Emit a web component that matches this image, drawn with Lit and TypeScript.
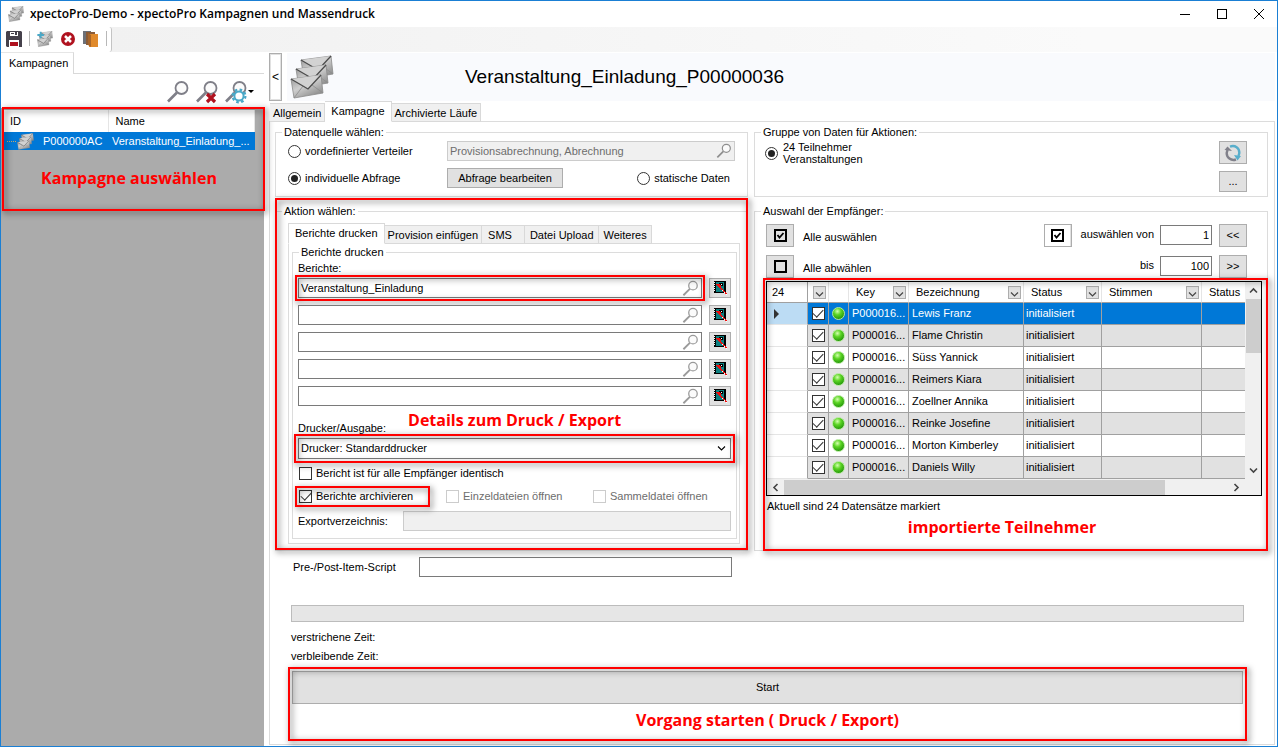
import { LitElement, html, css, svg, nothing } from "lit";
import { customElement, state } from "lit/decorators.js";
import { classMap } from "lit/directives/class-map.js";

const envelope = (x: number, y: number) => svg`
  <g transform="translate(${x} ${y})">
    <path d="M0 4 L30 0 L32 18 L3 23 Z" fill="url(#env)" stroke="#8a8a8a" stroke-width="0.8" />
    <path d="M3 23 L12 11 M32 18 L21 10" stroke="#8c8c8c" stroke-width="0.8" fill="none" />
    <path d="M0 4 L17 14 L30 0 Z" fill="#d2d2d2" />
    <path d="M0 4 L17 14 L30 0" fill="none" stroke="#4c4c4c" stroke-width="1.3" />
  </g>`;

const mails = (size: number) => html`
  <svg class="icon" width=${size} height=${size} viewBox="0 0 44 44" aria-hidden="true">
    <defs>
      <linearGradient id="env" x1="0" y1="0" x2="0.7" y2="1">
        <stop offset="0" stop-color="#8e8e8e" />
        <stop offset="0.5" stop-color="#cfcfcf" />
        <stop offset="1" stop-color="#8a8a8a" />
      </linearGradient>
    </defs>
    ${envelope(11, 1)}${envelope(6, 10)}${envelope(1, 20)}
  </svg>`;

const lens = (size: number, tone = "#7f7f88", extra: unknown = nothing) => html`
  <svg class="icon" width=${size} height=${size} viewBox="0 0 24 24" fill="none" aria-hidden="true">
    <circle cx="15.5" cy="8" r="6" stroke=${tone} stroke-width="1.8" fill="#fbfbfb" />
    <path d="M11 12.5 L2 21.5" stroke=${tone} stroke-width="2.6" />
    ${extra}
  </svg>`;

const cross = svg`<path d="M12 14 L20 22 M20 14 L12 22" stroke="#b0121f" stroke-width="3.2" />`;
const gear = svg`
  <circle cx="15" cy="16" r="6.4" stroke="#4aa9c8" stroke-width="2.2" stroke-dasharray="2.6 2.4" />
  <circle cx="15" cy="16" r="4.6" fill="#fff" stroke="#4aa9c8" stroke-width="2" />`;

const chevron = (path: string, weight = 1.6) => html`
  <svg class="icon" width="9" height="9" viewBox="0 0 9 9" fill="none" aria-hidden="true">
    <path d=${path} stroke="currentColor" stroke-width=${weight} />
  </svg>`;
const UP = "M1 6.5 L4.5 3 L8 6.5";
const DOWN = "M1 2.5 L4.5 6 L8 2.5";
const LEFT = "M6.5 1 L3 4.5 L6.5 8";
const RIGHT = "M2.5 1 L6 4.5 L2.5 8";

const editor = html`
  <svg class="icon" width="16" height="16" viewBox="0 0 16 16" shape-rendering="crispEdges" aria-hidden="true">
    <path d="M2 1h12v12H2z" fill="#000" />
    <path d="M4 2h8v10H4z" fill="#0d8080" />
    <path d="M2 2h1v1H2z M2 4h1v1H2z M2 6h1v1H2z M2 8h1v1H2z M2 10h1v1H2z" fill="#fff" />
    <path d="M7 3h4v3H7z" fill="#000" />
    <path d="M9 4h1v1H9z" fill="#fff" />
    <path d="M4 4h4v1h1v2H8v1H7V7H6V6H5V5H4z" fill="#f00d0d" />
    <path d="M8 7h1v1h1v1h1v1h1v1h1v1h1v1h1v2h-1v-1h-1v-1h-1v-1h-1v-1h-1v-1H9V9H8z" fill="#f00d0d" />
    <path d="M10 10h1v1h-1z M12 12h1v1h-1z M14 14h1v1h-1z" fill="#fff" />
  </svg>`;

const tick = (checked: boolean, plain = false) => html`
  <svg class="icon ${plain ? "plain" : ""}" width="19" height="19" viewBox="0 0 19 19" fill="none" aria-hidden="true">
    <rect x="4" y="4" width="11" height="11" stroke="#000" stroke-width="2" />
    ${checked ? svg`<path d="M6.5 9 L8.5 11.5 L12.5 7" stroke="#000" stroke-width="1.8" />` : nothing}
  </svg>`;

const PEOPLE = [
  "Lewis Franz",
  "Flame Christin",
  "Süss Yannick",
  "Reimers Kiara",
  "Zoellner Annika",
  "Reinke Josefine",
  "Morton Kimberley",
  "Daniels Willy",
];

const REPORTS = ["Veranstaltung_Einladung", "", "", "", ""];

@customElement("app-root")
export class AppRoot extends LitElement {
  @state() private selected = 0;

  static styles = css`
    :host {
      display: block;
      font: 11px/13px "Liberation Sans", Arial, sans-serif;
      color: #000;
    }
    * {
      box-sizing: border-box;
    }
    button,
    input,
    select {
      font: inherit;
      color: inherit;
      margin: 0;
      border-radius: 0;
      outline: none;
    }
    .icon {
      display: block;
      flex: none;
    }
    .window {
      min-height: 100vh;
      display: flex;
      flex-direction: column;
      border: 1px solid #1a7fd4;
      background: #fff;
    }

    /* title bar and tool strip */
    .titlebar {
      display: flex;
      align-items: center;
      height: 26px;
      padding: 0 11px 0 7px;
      gap: 6px;
      font: 600 12px/16px "Open Sans", "Noto Sans", sans-serif;
    }
    .titlebar h1 {
      flex: 1;
      margin: 0;
      font: inherit;
    }
    .winbuttons {
      display: flex;
      gap: 23px;
    }
    .winbuttons button,
    .strip button,
    .search button {
      border: 0;
      padding: 0;
      background: none;
      display: flex;
      align-items: center;
    }
    .strip {
      display: flex;
      height: 25px;
      background: linear-gradient(90deg, #f0f0f0, #fafafa 85%);
    }
    .tools {
      display: flex;
      align-items: center;
      gap: 7px;
      padding: 0 4px 2px 5px;
      background: #fff;
      border-right: 1px solid #c4c4c4;
      border-radius: 0 3px 3px 0;
    }
    .tools .sep {
      width: 1px;
      height: 15px;
      background: #b8b8b8;
    }

    .body {
      flex: 1;
      display: flex;
      gap: 5px;
    }

    /* campaign list */
    .side {
      flex: none;
      width: 263px;
      display: flex;
      flex-direction: column;
    }
    .sidetabs {
      display: flex;
    }
    .sidetabs a {
      padding: 4px 5px 4px 8px;
      border-right: 1px solid #d9d9d9;
      border-top: 1px solid #e6e6e6;
      color: #000;
      text-decoration: none;
    }
    .sidetabs span {
      flex: 1;
      border-bottom: 1px solid #d9d9d9;
    }
    .search {
      display: flex;
      justify-content: flex-end;
      align-items: center;
      gap: 5px;
      height: 34px;
      padding: 2px 10px 0 0;
    }
    .listarea {
      flex: 1;
      padding-left: 1px;
      background: #ababab;
    }
    .listbox {
      position: relative;
      height: 103px;
      padding: 2px 9px 0 1px;
    }
    .tree {
      width: 100%;
      border-collapse: collapse;
      table-layout: fixed;
    }
    .tree th {
      height: 22px;
      padding: 0 7px;
      background: #fff;
      text-align: left;
      font-weight: normal;
      border-right: 1px solid #e5e5e5;
    }
    .tree td {
      height: 18px;
      padding: 0 4px;
      background: #0078d7;
      color: #fff;
      white-space: nowrap;
    }
    .node {
      display: flex;
      align-items: center;
      gap: 9px;
    }
    .node::before {
      content: "";
      width: 9px;
      margin-right: -8px;
      border-top: 1px dotted #c9a66b;
    }

    /* red frames over the explained regions */
    .marked {
      position: relative;
    }
    .frame {
      position: absolute;
      inset: 0;
      border: 2px solid #f00;
      filter: drop-shadow(2px 2px 3px rgba(0, 0, 0, 0.65));
      pointer-events: none;
    }
    .frame.list {
      inset: -1px -1px 0 0;
    }
    .frame.wide {
      inset: -4px;
    }
    .frame.action-frame {
      inset: -20px -1px 0 -1px;
    }
    .note {
      color: #f00;
      font: 700 16px/20px "Open Sans", "Noto Sans", sans-serif;
      text-align: center;
      white-space: nowrap;
      margin: 0;
    }
    .listbox .note {
      margin-top: 18px;
    }

    /* right hand side */
    .main {
      flex: 1;
      min-width: 0;
      display: flex;
      flex-direction: column;
      padding: 1px 2px 1px 0;
    }
    .head {
      display: flex;
      height: 48px;
      gap: 5px;
    }
    .collapse {
      width: 13px;
      padding: 0;
      border: 1px solid #adadad;
      box-shadow: inset 0 0 0 1px #e1e1e1;
      background: #fff;
      font-size: 12px;
    }
    .banner {
      flex: 1;
      display: flex;
      align-items: center;
      padding-left: 3px;
      gap: 131px;
      background: #f9fafd;
    }
    .banner h2 {
      margin: 0;
      font-size: 19px;
      line-height: 22px;
      font-weight: normal;
    }
    .tabs {
      display: flex;
      align-items: flex-end;
      height: 21px;
      position: relative;
      z-index: 1;
      margin-bottom: -1px;
      padding-left: 1px;
    }
    .tabs a {
      height: 19px;
      padding: 3px 3px 0;
      border: 1px solid #d9d9d9;
      border-left-width: 0;
      background: #f0f0f0;
      color: #000;
      text-decoration: none;
      white-space: nowrap;
    }
    .tabs a.on {
      height: 21px;
      padding: 3px 6px 0;
      background: #fff;
      border-bottom-color: #fff;
    }
    .tabs.inner {
      padding-left: 0;
    }
    .tabs.inner a.on {
      border-left-width: 1px;
    }
    .tabs.inner .roomy {
      padding-right: 12px;
      padding-left: 6px;
    }
    .tabs.inner .mid {
      padding-right: 4px;
      padding-left: 5px;
    }
    .page {
      flex: 1;
      border: 1px solid #dcdcdc;
      padding: 3px 6px 2px 5px;
    }
    .columns {
      display: grid;
      grid-template-columns: 473px minmax(480px, 1fr);
      column-gap: 6px;
      row-gap: 7px;
    }
    fieldset {
      margin: 0;
      min-width: 0;
      border: 1px solid #dcdcdc;
      padding: 0;
    }
    legend {
      margin-left: 6px;
      padding: 0 2px;
      line-height: 14px;
    }
    .source {
      padding: 2px 12px 8px;
    }
    .grid2 {
      display: grid;
      grid-template-columns: 159px 1fr;
      row-gap: 7px;
      align-items: center;
    }
    .split {
      display: flex;
      justify-content: space-between;
      align-items: center;
      padding-right: 5px;
    }
    label.opt {
      display: flex;
      align-items: center;
      gap: 4px;
      white-space: nowrap;
    }
    input[type="radio"],
    input[type="checkbox"] {
      appearance: none;
      flex: none;
      width: 13px;
      height: 13px;
      border: 1px solid #333;
      background: #fff;
      display: grid;
      place-items: center;
    }
    input[type="radio"] {
      border-radius: 50%;
    }
    input[type="radio"]:checked::before {
      content: "";
      width: 7px;
      height: 7px;
      border-radius: 50%;
      background: #222;
    }
    input[type="checkbox"]:checked::before {
      content: "";
      width: 9px;
      height: 5px;
      margin-top: -3px;
      border: solid #333;
      border-width: 0 0 1px 1px;
      transform: rotate(-47deg);
    }
    input:disabled[type="checkbox"] {
      border-color: #ccc;
    }
    .opt.off {
      color: #6d6d6d;
    }
    .btn {
      display: flex;
      align-items: center;
      justify-content: center;
      padding: 0;
      border: 1px solid #adadad;
      background: #e1e1e1;
    }
    .btn.query {
      width: 116px;
      height: 20px;
    }
    .btn.square {
      width: 28px;
      height: 23px;
    }
    .btn.low {
      height: 21px;
    }
    .plain {
      box-sizing: content-box;
      padding: 1px 3px;
      background: #fff;
    }
    .field {
      display: flex;
      align-items: center;
      height: 20px;
      padding-right: 2px;
      border: 1px solid #7a7a7a;
      background: #fff;
    }
    .field input {
      flex: 1;
      min-width: 0;
      padding: 0 2px;
      border: 0;
      background: none;
    }
    .field.off {
      border-color: #ccc;
      background: #f0f0f0;
      color: #6d6d6d;
    }

    .action {
      padding: 5px 7px 4px 12px;
    }
    .tabpage {
      border: 1px solid #dcdcdc;
      padding: 1px 2px 4px 3px;
    }
    .print {
      padding: 3px 5px 7px 5px;
      display: flex;
      flex-direction: column;
    }
    .reports {
      display: grid;
      gap: 7px;
      margin-top: 3px;
    }
    .report {
      display: grid;
      grid-template-columns: 1fr 22px;
      gap: 7px;
    }
    .report .btn {
      height: 20px;
    }
    .output {
      display: flex;
      align-items: flex-end;
      gap: 22px;
      height: 29px;
    }
    .output .note {
      padding-bottom: 5px;
    }
    .combo {
      margin-top: 3px;
      display: grid;
      align-items: center;
    }
    .combo select {
      grid-area: 1 / 1;
      appearance: none;
      width: 100%;
      height: 21px;
      padding: 0 2px;
      border: 1px solid #7a7a7a;
      background: #fff;
    }
    .combo .icon {
      grid-area: 1 / 1;
      justify-self: end;
      margin-right: 5px;
      pointer-events: none;
    }
    .checks {
      display: grid;
      grid-template-columns: 147px 147px 1fr;
      row-gap: 10px;
      padding: 8px 0 0 1px;
    }
    .checks .all {
      grid-column: 1 / 4;
    }
    .checks .marked {
      justify-self: start;
    }
    .frame.check {
      inset: -4px -17px -4px -4px;
    }
    .export {
      display: grid;
      grid-template-columns: 105px 1fr;
      align-items: center;
      margin-top: 8px;
    }

    .group {
      padding: 2px 20px 4px 10px;
      display: flex;
      justify-content: space-between;
      align-items: flex-start;
    }
    .group label {
      line-height: 12px;
      gap: 5px;
    }
    .stack {
      display: grid;
      gap: 7px;
    }
    .recipients {
      display: flex;
      flex-direction: column;
      padding: 6px 5px 0 11px;
    }
    .picks {
      display: grid;
      grid-template-columns: auto 1fr auto auto auto auto;
      align-items: center;
      row-gap: 8px;
      padding-right: 15px;
    }
    .picks .name {
      padding: 4px 0 0 9px;
    }
    .picks .range {
      padding: 0 6px 2px 9px;
      text-align: right;
    }
    .picks .num {
      width: 52px;
      height: 20px;
      margin: 0 7px 2px 0;
      padding: 0 2px;
      text-align: right;
      border: 1px solid #7a7a7a;
    }
    .gap {
      grid-column: 3;
    }

    .result {
      margin-top: 3px;
      padding-bottom: 13px;
    }
    .result .note {
      padding-right: 24px;
    }
    .frame.result-frame {
      inset: -3px -6px -1px -3px;
    }
    .scroller {
      display: grid;
      grid-template-columns: 1fr 16px;
      border: 1px solid #000;
      background: #f0f0f0;
    }
    .people {
      width: 100%;
      border-spacing: 0;
      table-layout: fixed;
      background: #fff;
    }
    .people th {
      height: 21px;
      padding: 0 0 0 7px;
      font-weight: normal;
      text-align: left;
      border-right: 1px solid #e5e5e5;
      border-bottom: 1px solid #a0a0a0;
    }
    .people th:first-child {
      padding-left: 5px;
      border-right-color: #a0a0a0;
    }
    .people th:nth-child(2) {
      padding-left: 0;
    }
    .th {
      display: flex;
      justify-content: space-between;
      align-items: center;
      padding-right: 2px;
    }
    .filter {
      width: 13px;
      height: 13px;
      padding: 3px 1px 0;
      border: 1px solid #adadad;
      background: #e1e1e1;
      color: #444;
    }
    .people td {
      height: 22px;
      padding: 0 0 0 3px;
      border-right: 1px solid #a0a0a0;
      border-bottom: 1px solid #a0a0a0;
      white-space: nowrap;
    }
    .people td.tight {
      padding: 0 2px;
    }
    .people tbody tr:nth-child(even) td {
      background: #e1e1e1;
    }
    .people tbody tr.sel td {
      background: #0078d7;
      color: #fff;
    }
    .people tbody tr td:first-child {
      background: #fff;
      border-bottom-color: #e5e5e5;
      padding-left: 7px;
    }
    .people tbody tr.sel td:first-child {
      background: #bcdcf4;
    }
    .people tr > :last-child {
      border-right: 0;
    }
    .c1 { width: 41px; }
    .c2 { width: 21px; }
    .c3 { width: 20px; }
    .c4 { width: 60px; }
    .c5 { width: 115px; }
    .c6 { width: 78px; }
    .c7 { width: 100px; }
    .arrow {
      display: block;
      border: solid transparent;
      border-width: 5px 0 5px 5px;
      border-left-color: #333;
      width: 0;
    }
    .led {
      display: block;
      width: 13px;
      height: 13px;
      margin: 0 auto;
      border-radius: 50%;
      background: radial-gradient(circle at 40% 30%, #d4ffb0 0, #5cd524 35%, #23960a 80%);
      border: 1px solid #b4e89c;
    }
    .people input {
      margin: 0 auto;
    }
    .vbar,
    .hbar {
      display: flex;
      align-items: center;
      color: #444;
    }
    .vbar {
      flex-direction: column;
      padding: 4px 0;
    }
    .vbar i {
      width: 15px;
      height: 54px;
      margin: 4px 0 auto;
      background: #cdcdcd;
    }
    .hbar {
      height: 16px;
      padding: 0 4px;
    }
    .hbar i {
      width: 81%;
      height: 15px;
      margin: 0 auto 0 4px;
      background: #cdcdcd;
    }
    .status {
      margin: 0;
      padding: 4px 0 4px 1px;
    }

    .bottom {
      padding: 6px 24px 0 16px;
    }
    .script {
      display: grid;
      grid-template-columns: 126px 313px;
      align-items: center;
      padding-left: 2px;
    }
    .bar {
      height: 17px;
      margin-top: 28px;
      border: 1px solid #bcbcbc;
      background: #e6e6e6;
    }
    .times {
      margin-top: 6px;
      line-height: 19px;
    }
    .run {
      margin: 5px 1px 0;
      height: 66px;
    }
    .run .btn {
      width: 100%;
      height: 33px;
    }
    .run .note {
      padding-top: 6px;
    }
  `;

  private renderSide() {
    return html`
      <nav class="side">
        <div class="sidetabs"><a href="#kampagnen">Kampagnen</a><span></span></div>
        <div class="search">
          <button aria-label="Suchen">${lens(24)}</button>
          <button aria-label="Suche löschen">${lens(24, "#7f7f88", cross)}</button>
          <button aria-label="Suche einstellen">
            ${lens(24, "#7f7f88", gear)}
            <svg class="icon" width="6" height="4" aria-hidden="true"><path d="M0 0h6L3 3z" /></svg>
          </button>
        </div>
        <div class="listarea">
          <div class="listbox">
            <table class="tree">
              <colgroup><col style="width:105px" /><col /></colgroup>
              <thead><tr><th>ID</th><th>Name</th></tr></thead>
              <tbody>
                <tr>
                  <td><div class="node">${mails(17)}<span>P000000AC</span></div></td>
                  <td>Veranstaltung_Einladung_...</td>
                </tr>
              </tbody>
            </table>
            <p class="note">Kampagne auswählen</p>
            <div class="frame list"></div>
          </div>
        </div>
      </nav>`;
  }

  private renderSource() {
    return html`
      <fieldset>
        <legend>Datenquelle wählen:</legend>
        <div class="source grid2">
          <label class="opt"><input type="radio" name="source" />vordefinierter Verteiler</label>
          <div class="field off">
            <input aria-label="Verteiler" value="Provisionsabrechnung, Abrechnung" disabled />${lens(16, "#8e8e8e")}
          </div>
          <label class="opt"><input type="radio" name="source" checked />individuelle Abfrage</label>
          <div class="split">
            <button class="btn query">Abfrage bearbeiten</button>
            <label class="opt"><input type="radio" name="source" />statische Daten</label>
          </div>
        </div>
      </fieldset>`;
  }

  private renderGroup() {
    return html`
      <fieldset>
        <legend>Gruppe von Daten für Aktionen:</legend>
        <div class="group">
          <label class="opt">
            <input type="radio" name="group" checked /><span>24 Teilnehmer<br />Veranstaltungen</span>
          </label>
          <div class="stack">
            <button class="btn square" aria-label="Aktualisieren">
              <svg class="icon" width="18" height="18" viewBox="0 0 18 18" fill="none" aria-hidden="true">
                <path d="M6 2.600 C11 .800 15.500 4 15.300 9 L14.500 12" stroke="#58aecb" stroke-width="2.400" />
                <path d="M10 11 L17 12 L13.500 16.500 Z" fill="#58aecb" />
                <path d="M12 15.500 C7 17.200 2.500 13.500 2.700 9 L3.500 6" stroke="#80808a" stroke-width="2.400" />
                <path d="M0.500 6 L3.500 2.500 L8 7 Z" fill="#80808a" />
              </svg>
            </button>
            <button class="btn square low">...</button>
          </div>
        </div>
      </fieldset>`;
  }

  private renderAction() {
    return html`
      <fieldset class="marked">
        <legend>Aktion wählen:</legend>
        <div class="action">
          <nav class="tabs inner">
            <a class="on" href="#drucken">Berichte drucken</a><a href="#provision">Provision einfügen</a
            ><a class="roomy" href="#sms">SMS</a><a class="mid" href="#upload">Datei Upload</a
            ><a class="mid" href="#weiteres">Weiteres</a>
          </nav>
          <div class="tabpage">
            <fieldset>
              <legend>Berichte drucken</legend>
              <div class="print">
                <label for="report0">Berichte:</label>
                <div class="reports">
                  ${REPORTS.map(
                    (name, i) => html`
                      <div class="report">
                        <div class="field marked">
                          <input id="report${i}" aria-label="Bericht ${i + 1}" .value=${name} />${lens(17, "#9a9a9a")}
                          ${i === 0 ? html`<div class="frame wide"></div>` : nothing}
                        </div>
                        <button class="btn" aria-label="Bericht ${i + 1} bearbeiten">${editor}</button>
                      </div>`
                  )}
                </div>
                <div class="output">
                  <label for="printer">Drucker/Ausgabe:</label>
                  <p class="note">Details zum Druck / Export</p>
                </div>
                <div class="combo marked">
                  <select id="printer"><option>Drucker: Standarddrucker</option></select>
                  ${chevron(DOWN, 1.1)}
                  <div class="frame wide"></div>
                </div>
                <div class="checks">
                  <label class="opt all"><input type="checkbox" />Bericht ist für alle Empfänger identisch</label>
                  <label class="opt marked">
                    <input type="checkbox" checked />Berichte archivieren
                    <span class="frame check"></span>
                  </label>
                  <label class="opt off"><input type="checkbox" disabled />Einzeldateien öffnen</label>
                  <label class="opt off"><input type="checkbox" disabled />Sammeldatei öffnen</label>
                </div>
                <div class="export">
                  <label for="dir">Exportverzeichnis:</label>
                  <div class="field off"><input id="dir" disabled /></div>
                </div>
              </div>
            </fieldset>
          </div>
        </div>
        <div class="frame action-frame"></div>
      </fieldset>`;
  }

  private renderTable() {
    const filter = (name: string) =>
      html`<button class="filter" aria-label="Filter ${name}">${chevron(DOWN, 1.2)}</button>`;
    return html`
      <div class="scroller">
        <table class="people">
          <colgroup>
            <col class="c1" /><col class="c2" /><col class="c3" /><col class="c4" /><col class="c5" /><col
              class="c6" /><col class="c7" /><col />
          </colgroup>
          <thead>
            <tr>
              <th>24</th>
              <th><div class="th"><span></span>${filter("Auswahl")}</div></th>
              <th></th>
              <th><div class="th">Key${filter("Key")}</div></th>
              <th><div class="th">Bezeichnung${filter("Bezeichnung")}</div></th>
              <th><div class="th">Status${filter("Status")}</div></th>
              <th><div class="th">Stimmen${filter("Stimmen")}</div></th>
              <th>Status</th>
            </tr>
          </thead>
          <tbody>
            ${PEOPLE.map(
              (name, i) => html`
                <tr class=${classMap({ sel: i === this.selected })} @click=${() => (this.selected = i)}>
                  <td>${i === this.selected ? html`<span class="arrow"></span>` : nothing}</td>
                  <td class="tight"><input type="checkbox" checked aria-label=${name} /></td>
                  <td class="tight"><span class="led"></span></td>
                  <td>P000016...</td>
                  <td>${name}</td>
                  <td class="tight">initialisiert</td>
                  <td></td>
                  <td></td>
                </tr>`
            )}
          </tbody>
        </table>
        <div class="vbar">${chevron(UP)}<i></i>${chevron(DOWN)}</div>
        <div class="hbar">${chevron(LEFT)}<i></i>${chevron(RIGHT)}</div>
      </div>`;
  }

  private renderRecipients() {
    return html`
      <fieldset>
        <legend>Auswahl der Empfänger:</legend>
        <div class="recipients">
          <div class="picks">
            <button class="btn square" aria-label="Alle auswählen">${tick(true)}</button>
            <span class="name">Alle auswählen</span>
            <button class="btn square" aria-label="Bereich auswählen">${tick(true, true)}</button>
            <label class="range" for="from">auswählen von</label>
            <input class="num" id="from" value="1" />
            <button class="btn square">&lt;&lt;</button>

            <button class="btn square" aria-label="Alle abwählen">${tick(false)}</button>
            <span class="name">Alle abwählen</span>
            <span class="gap"></span>
            <label class="range" for="to">bis</label>
            <input class="num" id="to" value="100" />
            <button class="btn square">&gt;&gt;</button>
          </div>
          <div class="result marked">
            ${this.renderTable()}
            <p class="status">Aktuell sind 24 Datensätze markiert</p>
            <p class="note">importierte Teilnehmer</p>
            <div class="frame result-frame"></div>
          </div>
        </div>
      </fieldset>`;
  }

  render() {
    return html`
      <div class="window">
        <header class="titlebar">
          ${mails(16)}
          <h1>xpectoPro-Demo - xpectoPro Kampagnen und Massendruck</h1>
          <div class="winbuttons">
            <button aria-label="Minimieren">
              <svg class="icon" width="14" height="14"><path d="M2 7.500h10" stroke="#000" /></svg>
            </button>
            <button aria-label="Maximieren">
              <svg class="icon" width="14" height="14"><rect x="2.500" y="2.500" width="9" height="9" fill="none" stroke="#000" /></svg>
            </button>
            <button aria-label="Schließen">
              <svg class="icon" width="14" height="14"><path d="M2 2l10 10M12 2L2 12" stroke="#000" /></svg>
            </button>
          </div>
        </header>
        <div class="strip">
          <div class="tools">
            <button aria-label="Speichern">
              <svg class="icon" width="16" height="16" viewBox="0 0 16 16">
                <path d="M1 0h14l1 1v15H1l-1-1V1z" fill="#45414b" />
                <path d="M4 1h8v4H4z" fill="#fff" /><path d="M9 1h2v3H9z M5 2h3v1H5z" fill="#45414b" />
                <path d="M3 9h10v7H3z" fill="#fff" /><path d="M4 11h8v4H4z" fill="#b0121f" />
              </svg>
            </button>
            <span class="sep"></span>
            <button aria-label="Kampagne hinzufügen">
              <svg class="icon" width="16" height="16" viewBox="0 0 44 44">
                ${envelope(11, 1)}${envelope(6, 10)}${envelope(1, 20)}
                <path d="M10 2v18M1 11h18" stroke="#4aa9c8" stroke-width="5" />
              </svg>
            </button>
            <button aria-label="Löschen">
              <svg class="icon" width="16" height="16" viewBox="0 0 16 16">
                <circle cx="8" cy="8" r="7" fill="#b0121f" />
                <path d="M5 5l6 6M11 5l-6 6" stroke="#fff" stroke-width="2.500" />
              </svg>
            </button>
            <button aria-label="Kopieren">
              <svg class="icon" width="16" height="16" viewBox="0 0 16 16">
                <path d="M0 0h8v13H0z" fill="#6d7178" /><path d="M3 1h9v13H3z" fill="#8a5c38" />
                <path d="M6 3h9v13H6z" fill="#e08a2c" /><path d="M5 2l3 2v12l-3-2z" fill="#a8662a" />
              </svg>
            </button>
            <span class="sep"></span>
          </div>
        </div>
        <div class="body">
          ${this.renderSide()}
          <main class="main">
            <div class="head">
              <button class="collapse" aria-label="Liste einklappen">&lt;</button>
              <div class="banner">
                ${mails(44)}
                <h2>Veranstaltung_Einladung_P00000036</h2>
              </div>
            </div>
            <nav class="tabs">
              <a href="#allgemein">Allgemein</a><a class="on" href="#kampagne">Kampagne</a
              ><a href="#archiv">Archivierte Läufe</a>
            </nav>
            <div class="page">
              <div class="columns">
                ${this.renderSource()} ${this.renderGroup()} ${this.renderAction()} ${this.renderRecipients()}
              </div>
              <div class="bottom">
                <div class="script">
                  <label for="script">Pre-/Post-Item-Script</label>
                  <div class="field"><input id="script" /></div>
                </div>
                <div class="bar" role="progressbar" aria-label="Fortschritt"></div>
                <div class="times">
                  <div>verstrichene Zeit:</div>
                  <div>verbleibende Zeit:</div>
                </div>
                <div class="run marked">
                  <button class="btn">Start</button>
                  <p class="note">Vorgang starten ( Druck / Export)</p>
                  <div class="frame wide"></div>
                </div>
              </div>
            </div>
          </main>
        </div>
      </div>`;
  }
}
